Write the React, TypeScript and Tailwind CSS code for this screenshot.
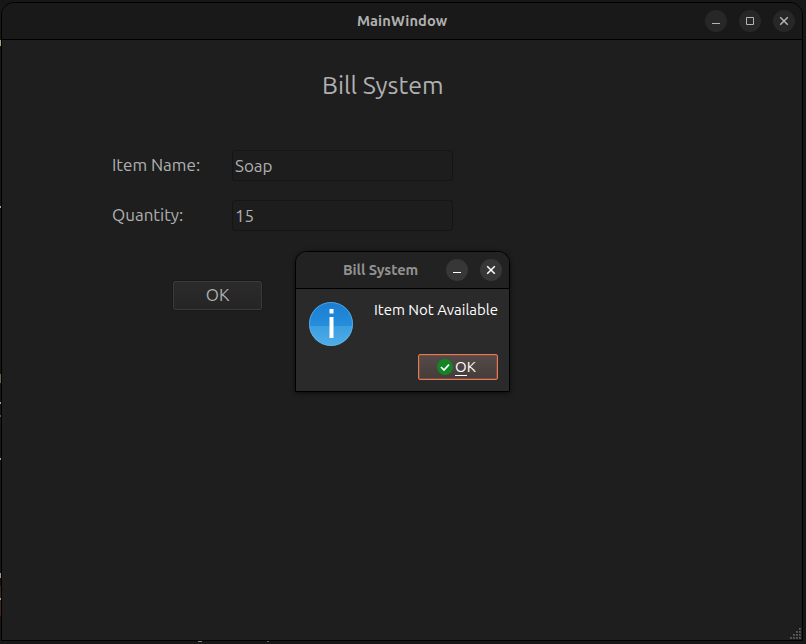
import React from "react";

const font = "font-['Ubuntu','Noto_Sans','Open_Sans',sans-serif]";

function ControlButton({ kind, bright }: { kind: "min" | "max" | "close"; bright?: boolean }) {
  return (
    <span
      className={`flex size-[22px] items-center justify-center rounded-full ${
        bright ? "bg-[#373737] text-white" : "bg-[#272727] text-[#b4b4b4]"
      }`}
    >
      <svg width="22" height="22" viewBox="0 0 22 22" fill="none" stroke="currentColor">
        {kind === "min" && <path d="M7 13.5h8" />}
        {kind === "max" && <path d="M7.5 7.5h7v7h-7z" />}
        {kind === "close" && <path d="M7.2 7.2l7.6 7.6M14.8 7.2l-7.6 7.6" strokeWidth="1.5" />}
      </svg>
    </span>
  );
}

function Field({ label, value }: { label: string; value: string }) {
  return (
    <div className="flex h-[31px]">
      <span className="w-[120px] whitespace-nowrap leading-[30px]">{label}</span>
      <div className="flex h-[31px] w-[221px] items-center rounded-[3px] border border-[#151515] bg-[#1d1d1d] pl-[2px] pt-px">
        {value}
      </div>
    </div>
  );
}

function SizeGrip() {
  const dots = [
    [9, 0], [6, 3], [9, 3], [3, 6], [6, 6], [9, 6], [0, 9], [3, 9], [6, 9], [9, 9],
  ];
  return (
    <svg width="11" height="11" className="absolute bottom-px right-px">
      {dots.map(([x, y]) => (
        <g key={`${x}-${y}`}>
          <rect x={x} y={y} width="2" height="2" fill="#4c4c4c" />
          <rect x={x} y={y} width="1" height="1" fill="#606060" />
        </g>
      ))}
    </svg>
  );
}

function Dialog() {
  return (
    <div className="absolute left-[295px] top-[251px] flex h-[141px] w-[215px] flex-col overflow-hidden rounded-t-[12px] border border-black bg-[#2a2a2a] shadow-[0_1px_5px_rgba(0,0,0,0.6)]">
      <div className="flex h-[37px] shrink-0 items-center border-b border-black bg-[#222222] pr-[7px]">
        <span className="ml-[47px] w-[75px] whitespace-nowrap text-[14.667px] font-bold tracking-[-0.1px] text-[#919191]">
          Bill System
        </span>
        <div className="ml-auto flex gap-3">
          <ControlButton kind="min" bright />
          <ControlButton kind="close" bright />
        </div>
      </div>
      <div className="flex pl-[12px] pt-[12px]">
        <svg width="46" height="46" viewBox="0 0 46 46">
          <defs>
            <linearGradient id="info" x1="0" y1="0" x2="0" y2="1">
              <stop offset="0" stopColor="#1a7cd2" />
              <stop offset="0.54" stopColor="#258edc" />
              <stop offset="0.54" stopColor="#3c9ee1" />
              <stop offset="1" stopColor="#4faee8" />
            </linearGradient>
          </defs>
          <circle cx="23" cy="23" r="22" fill="url(#info)" />
          <circle cx="23" cy="23" r="21.5" fill="none" stroke="#70bbec" strokeOpacity="0.6" />
          <path d="M21.5 8h4v4.5h-4zM21.5 16h4v21h-4z" fill="#fff" />
        </svg>
        <span className="ml-[20px] whitespace-nowrap text-[15px] leading-[18px] text-white">
          Item Not Available
        </span>
      </div>
      <div className="mr-[11px] mt-[7px] flex h-[26px] w-[80px] items-center self-end rounded-[2px] border border-[#ef764e] bg-linear-to-b from-[#554a47] to-[#453d3b] pl-[18px] shadow-[inset_0_0_0_1px_#685048]">
        <svg width="16" height="16" viewBox="0 0 16 16">
          <circle cx="8" cy="8" r="8" fill="#138525" />
          <path d="M4 8l3 3 5-5.3" fill="none" stroke="#fff" strokeWidth="1.7" />
        </svg>
        <span className="ml-[2px] flex h-[17px] text-[15px] text-white">
          <span className="h-[17px] border-b border-white leading-[16px]">O</span>
          <span className="leading-[16px]">K</span>
        </span>
      </div>
    </div>
  );
}

export default function App() {
  return (
    <div className={`relative h-[644px] w-[806px] overflow-hidden bg-[#171717] pl-px pt-[2px] ${font}`}>
      <span className="absolute left-0 top-[40px] h-[6px] w-px bg-[#a5a374]" />
      <span className="absolute left-0 top-[206px] h-[2px] w-px bg-[#aaa]" />
      <span className="absolute left-0 top-[374px] h-[9px] w-px bg-[#666848]" />
      <span className="absolute left-0 top-[402px] h-[2px] w-px bg-[#bd9876]" />
      <span className="absolute left-0 top-[415px] h-[2px] w-px bg-[#665b52]" />
      <span className="absolute left-0 top-[458px] h-[2px] w-px bg-[#bd9876]" />
      <span className="absolute left-0 top-[573px] h-[5px] w-px bg-[#a69a7c]" />
      <span className="absolute left-0 top-[586px] h-[30px] w-px bg-[#42251b]" />
      <span className="absolute left-0 top-[598px] h-[2px] w-px bg-[#bd9876]" />
      <span className="absolute left-[198px] top-[641px] h-px w-[4px] bg-[#8a8171]" />
      <span className="absolute left-[267px] top-[641px] h-px w-[2px] bg-[#66604e]" />
      <div className="relative flex h-[639px] w-[802px] flex-col rounded-t-[13px] border border-black bg-[#1e1e1e] text-[#b0b0b0]">
        <header className="flex h-[37px] shrink-0 items-center rounded-t-[12px] border-b border-black bg-[#191919] pr-[7px]">
          <span className="ml-[355px] whitespace-nowrap text-[14.667px] font-bold tracking-[0.06px]">MainWindow</span>
          <div className="ml-auto flex gap-3">
            <ControlButton kind="min" />
            <ControlButton kind="max" />
            <ControlButton kind="close" />
          </div>
        </header>
        <main className="flex flex-col pl-[110px]">
          <h1 className="ml-[210px] mt-[28px] whitespace-nowrap text-[25px] font-normal leading-[34px]">
            Bill System
          </h1>
          <div className="mt-[48px] flex flex-col gap-[19px] text-[17px]">
            <Field label="Item Name:" value="Soap" />
            <Field label="Quantity:" value="15" />
          </div>
          <div className="ml-[61px] mt-[50px] flex h-[29px] w-[89px] items-center justify-center rounded-[2px] border border-[#3a3a3a] bg-linear-to-b from-[#2b2b2b] to-[#252525] pb-[2px] text-[17px] shadow-[0_0_0_1px_#191919]">
            OK
          </div>
        </main>
        <SizeGrip />
      </div>
      <Dialog />
    </div>
  );
}
